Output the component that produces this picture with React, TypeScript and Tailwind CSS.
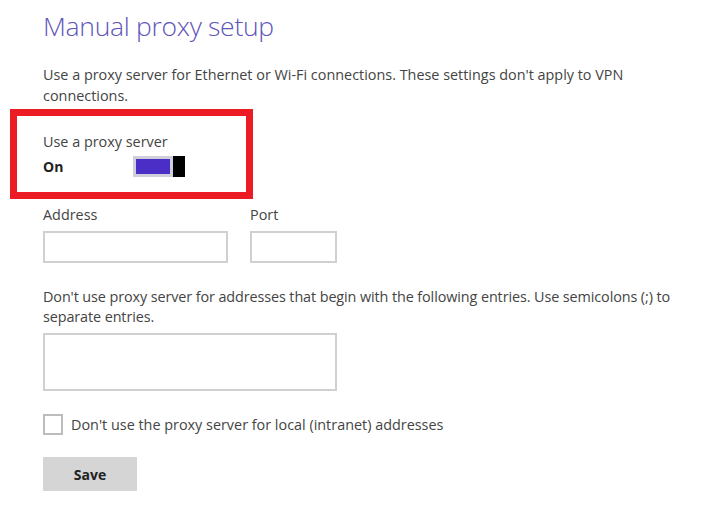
const App = () => {
    return (
        <div className="w-[704px] h-[520px] bg-white overflow-hidden font-['Open_Sans',sans-serif] text-[#444]">
            <div className="pl-[43px] pt-[6px]">
                <h1 className="text-[26.5px] font-light leading-[40px] text-[#6055ba] tracking-[-0.3px]">Manual proxy setup</h1>
                <p className="mt-[18px] w-[620px] text-[14.4px] leading-[21px]">
                    Use a proxy server for Ethernet or Wi-Fi connections. These settings don't apply to VPN connections.
                </p>
            </div>

            <div className="ml-[10px] mt-[3px] w-[243px] h-[90px] border-[7px] border-[#ec1c24] pl-[26px] pt-[16px]">
                <div className="text-[14.4px] leading-[20px]">Use a proxy server</div>
                <div className="flex items-center mt-[4px] h-[21px]">
                    <span className="w-[90px] text-[14px] font-bold leading-[20px] text-[#222]">On</span>
                    <div className="flex w-[52px] h-[21px]">
                        <div className="flex-1 bg-[#cfcfdc] p-[3px]">
                            <div className="h-full bg-[#4a2ec6]" />
                        </div>
                        <div className="w-[12px] bg-black" />
                    </div>
                </div>
            </div>

            <div className="pl-[43px] pt-[6px]">
                <div className="flex gap-[22px]">
                    <div className="flex flex-col">
                        <label className="text-[14.4px] leading-[20px]">Address</label>
                        <div className="mt-[6px] w-[185px] h-[32px] border-2 border-[#d0d0d0]" />
                    </div>
                    <div className="flex flex-col">
                        <label className="text-[14.4px] leading-[20px]">Port</label>
                        <div className="mt-[6px] w-[87px] h-[32px] border-2 border-[#d0d0d0]" />
                    </div>
                </div>

                <p className="mt-[24px] w-[650px] text-[14.4px] leading-[20px] tracking-[-0.1px]">
                    Don't use proxy server for addresses that begin with the following entries. Use semicolons (;) to separate entries.
                </p>
                <div className="mt-[6px] w-[294px] h-[58px] border-2 border-[#d0d0d0]" />

                <div className="flex items-center mt-[23px] gap-[8px]">
                    <div className="w-[20px] h-[21px] border-2 border-[#bdbdbd]" />
                    <span className="text-[14.4px] leading-[20px]">Don't use the proxy server for local (intranet) addresses</span>
                </div>

                <button className="mt-[22px] w-[94px] h-[34px] bg-[#d5d5d5] text-[14px] font-bold text-[#222]">Save</button>
            </div>
        </div>
    );
};

export default App;
